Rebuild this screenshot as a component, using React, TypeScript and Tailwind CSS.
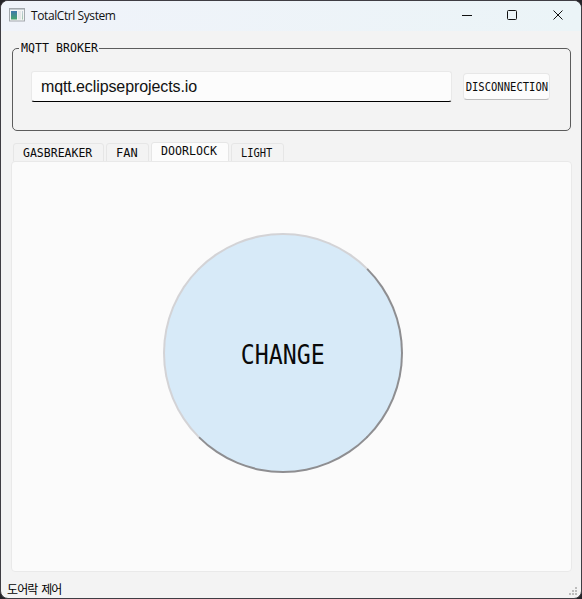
import React from "react";

const LCD = "font-['DejaVu_Sans_Mono','Liberation_Mono',monospace] whitespace-pre text-[#0a0a0a]";

function AppIcon() {
  return (
    <svg width="16" height="14" viewBox="0 0 16 14" className="mb-[2px] block">
      <defs>
        <linearGradient id="pane" x1="0" y1="0" x2="0" y2="1">
          <stop offset="0" stopColor="#3f78ad" />
          <stop offset="1" stopColor="#48a66b" />
        </linearGradient>
        <linearGradient id="side" x1="0" y1="0" x2="0" y2="1">
          <stop offset="0" stopColor="#c3cfdc" />
          <stop offset="1" stopColor="#9fc4a9" />
        </linearGradient>
      </defs>
      <rect x="0.5" y="0.5" width="15" height="12.5" fill="#f4f5f5" stroke="#a3a8ad" />
      <rect x="1" y="1" width="14" height="1" fill="#c5cbd0" />
      <rect x="2" y="3" width="6" height="8.5" fill="url(#pane)" />
      <rect x="9" y="3" width="3" height="8.5" fill="#e4e7e8" />
      <rect x="13" y="3" width="1" height="8.5" fill="url(#side)" />
    </svg>
  );
}

function TitleBar() {
  return (
    <header className="flex h-[30px] items-center bg-gradient-to-r from-[#f0f3fa] to-[#ebf4f7] pl-2">
      <AppIcon />
      <span className="ml-[6px] font-['Open_Sans','Noto_Sans',sans-serif] text-[12px] leading-[16px] tracking-[-0.41px] text-[#111]">
        TotalCtrl System
      </span>
      <svg width="104" height="12" viewBox="0 0 104 12" fill="none" stroke="#111" className="mb-[4px] ml-auto mr-[16px]">
        <path d="M1 7.5h10" />
        <rect x="46.5" y="2.5" width="9" height="9" rx="1" />
        <path d="M92.5 2.5l9 9M101.5 2.5l-9 9" />
      </svg>
    </header>
  );
}

function Broker() {
  return (
    <fieldset className="ml-[11px] mr-[10px] mt-[9px] h-[91px] rounded-[5px] border border-[#5c5c5c] pl-[6px]">
      <legend className={`${LCD} h-[16px] w-[80px] pl-[2px] text-[13px] leading-[15px]`}>
        <span className="inline-block origin-left scale-x-[0.895]">MQTT BROKER</span>
      </legend>
      <div className="mt-[15px] flex pl-[12px]">
        <input
          readOnly
          value="mqtt.eclipseprojects.io"
          className="h-[31px] w-[421px] rounded-[3px] border border-[#e9e9e9] border-b-black bg-[#fcfcfc] px-[9px] font-['Liberation_Sans',Arial,sans-serif] text-[16px] tracking-[-0.1px] text-[#111] outline-none"
        />
        <button
          className={`${LCD} ml-[11px] mt-[2px] flex h-[27px] w-[87px] items-center justify-center rounded-[4px] border border-[#e7e7e7] border-b-[#bdbdbd] bg-[#fcfcfc] text-[13px] leading-[16px]`}
        >
          <span className="scale-x-[0.81]">DISCONNECTION</span>
        </button>
      </div>
    </fieldset>
  );
}

const tabBase = `${LCD} rounded-t-[3px] border border-[#e6e6e6] pl-[9px] text-left text-[13px] leading-[16px]`;

function Tabs() {
  return (
    <nav className="ml-[12px] mt-[11px] flex h-[20px] items-end gap-[2px]">
      <button className={`${tabBase} h-[19px] w-[91px]`}>
        <span className="block origin-left scale-x-[0.885]">GASBREAKER</span>
      </button>
      <button className={`${tabBase} h-[19px] w-[43px]`}>
        <span className="block origin-left scale-x-[0.92]">FAN</span>
      </button>
      <button className={`${tabBase} h-[20px] w-[78px] bg-[#fcfcfc] pb-[2px]`}>
        <span className="block origin-left scale-x-[0.895]">DOORLOCK</span>
      </button>
      <button className={`${tabBase} h-[19px] w-[53px]`}>
        <span className="block origin-left scale-x-[0.8]">LIGHT</span>
      </button>
    </nav>
  );
}

function StatusBar() {
  return (
    <footer className="flex flex-1 items-end justify-between pl-[6px] pr-[2px]">
      <span className="mb-[1px] font-['Noto_Sans_CJK_KR',sans-serif] text-[12px] leading-[16px] tracking-[-0.9px] text-black [word-spacing:2px]">
        도어락 제어
      </span>
      <svg width="10" height="10" viewBox="0 0 10 10" fill="#bdbdbd" className="mb-[1px]">
        <path d="M6 0h2v2H6zM3 3h2v2H3zM6 3h2v2H6zM0 6h2v2H0zM3 6h2v2H3zM6 6h2v2H6z" />
      </svg>
    </footer>
  );
}

export default function App() {
  return (
    <div className="h-[599px] w-[582px] bg-[#252328]">
      <div className="flex h-[599px] w-[582px] flex-col overflow-hidden rounded-[8px] border border-[#3f3d43] bg-[#f3f3f3]">
        <TitleBar />
        <Broker />
        <Tabs />
        <main className="-mt-px ml-[10px] flex h-[411px] w-[561px] shrink-0 justify-center rounded-[4px] border border-[#e9e9e9] bg-[#fbfbfb] pr-[17px] pt-[71px]">
          <button
            className={`${LCD} flex size-[240px] items-center justify-center rounded-full border-2 border-b-[#8e8e91] border-l-[#d3d3d6] border-r-[#8e8e91] border-t-[#d3d3d6] bg-[#d7eaf8] pt-[3px] text-[27px] leading-[32px]`}
          >
            <span className="scale-x-[0.86]">CHANGE</span>
          </button>
        </main>
        <StatusBar />
      </div>
    </div>
  );
}
